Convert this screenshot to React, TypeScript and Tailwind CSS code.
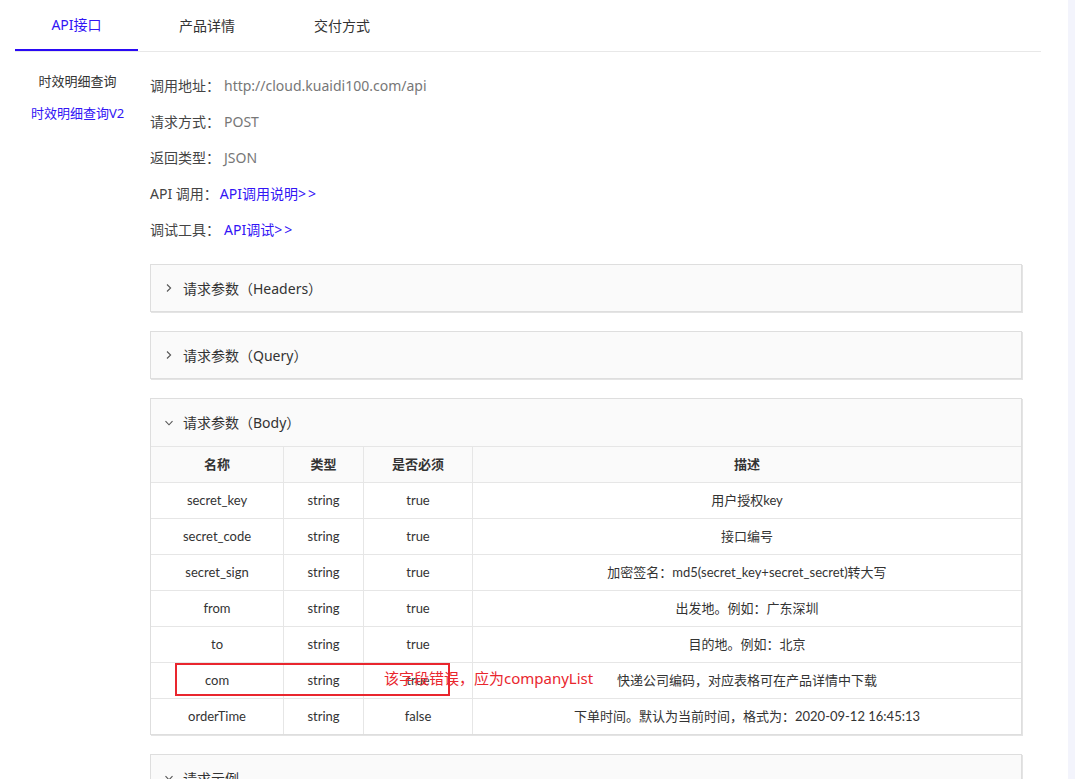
import React from "react";

const BLUE = "text-[#3214f5]";

function Chevron({ open }: { open?: boolean }) {
  return (
    <svg width="10" height="10" viewBox="0 0 10 10" className="mr-[9px] shrink-0">
      {open ? (
        <polyline points="1.5,3.2 5,6.8 8.5,3.2" fill="none" stroke="#555" strokeWidth="1.1" />
      ) : (
        <polyline points="3,1.5 6.6,5 3,8.5" fill="none" stroke="#555" strokeWidth="1.1" />
      )}
    </svg>
  );
}

function PanelHeader({ title, open, h }: { title: string; open?: boolean; h: string }) {
  return (
    <div className={`flex ${h} items-center pl-[13px] text-[14px] text-[#333]`}>
      <Chevron open={open} />
      <span>{title}</span>
    </div>
  );
}

const rows: [string, string, string, string][] = [
  ["secret_key", "string", "true", "用户授权key"],
  ["secret_code", "string", "true", "接口编号"],
  ["secret_sign", "string", "true", "加密签名：md5(secret_key+secret_secret)转大写"],
  ["from", "string", "true", "出发地。例如：广东深圳"],
  ["to", "string", "true", "目的地。例如：北京"],
  ["com", "string", "true", "快递公司编码，对应表格可在产品详情中下载"],
  ["orderTime", "string", "false", "下单时间。默认为当前时间，格式为：2020-09-12 16:45:13"],
];

export default function App() {
  return (
    <div className="relative flex h-[779px] w-full overflow-hidden bg-white font-['Noto_Sans','Noto_Sans_CJK_SC',sans-serif]">
      <div className="w-[1068px] shrink-0">
        {/* tabs */}
        <div className="ml-[15px] flex h-[52px] w-[1026px] border-b border-[#e8e8e8] text-[14px] text-[#333]">
          <div className={`flex w-[123px] items-center justify-center border-b-2 border-[#2a0af5] ${BLUE}`}>API接口</div>
          <div className="flex w-[138px] items-center justify-center">产品详情</div>
          <div className="flex w-[132px] items-center justify-center">交付方式</div>
        </div>

        <div className="flex">
          {/* sidebar */}
          <div className="ml-[15px] w-[125px] shrink-0 pt-[14px] text-[13px]">
            <div className="flex h-[32px] items-center justify-center text-[#333]">时效明细查询</div>
            <div className={`flex h-[32px] items-center justify-center ${BLUE}`}>时效明细查询V2</div>
          </div>

          {/* main */}
          <div className="ml-[10px] w-[872px] pt-[15px]">
            <div className="text-[14px]">
              <div className="flex h-[36px] items-center">
                <span className="text-[#444]">调用地址：</span>
                <span className="ml-[4px] text-[#777]">http://cloud.kuaidi100.com/api</span>
              </div>
              <div className="flex h-[36px] items-center">
                <span className="text-[#444]">请求方式：</span>
                <span className="ml-[4px] text-[#777]">POST</span>
              </div>
              <div className="flex h-[36px] items-center">
                <span className="text-[#444]">返回类型：</span>
                <span className="ml-[4px] text-[#777]">JSON</span>
              </div>
              <div className="flex h-[36px] items-center">
                <span className="text-[#444]">API 调用：</span>
                <span className={`ml-[2px] ${BLUE}`}>
                  API调用说明<span className="tracking-[2px]">&gt;&gt;</span>
                </span>
              </div>
              <div className="flex h-[36px] items-center">
                <span className="text-[#444]">调试工具：</span>
                <span className={`ml-[4px] ${BLUE}`}>
                  API调试<span className="tracking-[2px]">&gt;&gt;</span>
                </span>
              </div>
            </div>

            <div className="mt-[17px] flex flex-col gap-[19px]">
              <div className="border border-[#dedede] bg-[#fafafa] shadow-[1px_1px_0_#e4e4e4]">
                <PanelHeader title="请求参数（Headers）" h="h-[46px]" />
              </div>
              <div className="border border-[#dedede] bg-[#fafafa] shadow-[1px_1px_0_#e4e4e4]">
                <PanelHeader title="请求参数（Query）" h="h-[46px]" />
              </div>
              <div className="border border-[#dedede] bg-[#fafafa] shadow-[1px_1px_0_#e4e4e4]">
                <PanelHeader title="请求参数（Body）" open h="h-[47px]" />
                <div className="font-['Lato','Noto_Sans_CJK_SC',sans-serif] text-[13px] text-[#333]">
                  <div className="grid h-[36px] grid-cols-[132px_80px_109px_1fr] border-t border-[#e6e6e6] bg-[#fafafa] font-bold">
                    <div className="flex items-center justify-center">名称</div>
                    <div className="flex items-center justify-center border-l border-[#e6e6e6]">类型</div>
                    <div className="flex items-center justify-center border-l border-[#e6e6e6]">是否必须</div>
                    <div className="flex items-center justify-center border-l border-[#e6e6e6]">描述</div>
                  </div>
                  {rows.map((r) => (
                    <div
                      key={r[0]}
                      className="grid h-[36px] grid-cols-[132px_80px_109px_1fr] border-t border-[#e6e6e6] bg-white"
                    >
                      <div className="flex items-center justify-center">{r[0]}</div>
                      <div className="flex items-center justify-center border-l border-[#e6e6e6]">{r[1]}</div>
                      <div className="flex items-center justify-center border-l border-[#e6e6e6]">{r[2]}</div>
                      <div className="flex items-center justify-center border-l border-[#e6e6e6]">{r[3]}</div>
                    </div>
                  ))}
                </div>
              </div>
              <div className="border border-[#dedede] bg-[#fafafa] shadow-[1px_1px_0_#e4e4e4]">
                <PanelHeader title="请求示例" open h="h-[46px]" />
              </div>
            </div>
          </div>
        </div>
      </div>
      <div className="flex-1 bg-[#f3f4fc]" />

      {/* annotation overlay */}
      <div className="absolute left-[175px] top-[663px] h-[33px] w-[275px] border-2 border-[#e9262e]" />
      <div className="absolute left-[384px] top-[667px] text-[15px] leading-[22px] text-[#e9262e]">
        该字段错误，应为companyList
      </div>
    </div>
  );
}
